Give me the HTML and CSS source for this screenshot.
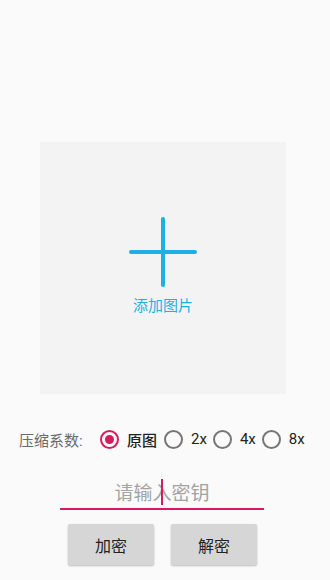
FILE: index.html
```html
<!DOCTYPE html>
<html lang="zh-CN">
<head>
<meta charset="utf-8">
<title>加密</title>
<link rel="stylesheet" href="styles.css">
</head>
<body>
<main class="screen">
  <section class="picker">
    <svg class="plus" width="72" height="72" viewBox="0 0 72 72" aria-hidden="true">
      <line x1="4" y1="36" x2="68" y2="36" />
      <line x1="36" y1="3" x2="36" y2="69" />
    </svg>
    <div class="picker-label">添加图片</div>
  </section>

  <div class="radio-row">
    <span class="row-label">压缩系数:</span>
    <label class="option first">
      <span class="dot checked"></span><span class="opt-text strong">原图</span>
    </label>
    <label class="option">
      <span class="dot"></span><span class="opt-text">2x</span>
    </label>
    <label class="option">
      <span class="dot"></span><span class="opt-text">4x</span>
    </label>
    <label class="option">
      <span class="dot"></span><span class="opt-text">8x</span>
    </label>
  </div>

  <div class="field">
    <span class="placeholder">请输入密钥</span>
    <span class="caret"></span>
  </div>

  <div class="buttons">
    <button class="btn">加密</button>
    <button class="btn">解密</button>
  </div>
</main>
</body>
</html>
```

FILE: styles.css
```css
html, body {
  margin: 0;
  padding: 0;
  background: #fafafa;
}
body {
  font-family: Roboto, "Noto Sans CJK SC", "Noto Sans", sans-serif;
  width: 330px;
  height: 580px;
  overflow: hidden;
}
.screen {
  display: flex;
  flex-direction: column;
  padding-top: 142px;
}
.picker {
  margin-left: 40px;
  width: 246px;
  height: 252px;
  box-sizing: border-box;
  background: #f3f3f3;
  display: flex;
  flex-direction: column;
  align-items: center;
  padding-top: 74px;
}
.plus line {
  stroke: #1eafe6;
  stroke-width: 4;
  stroke-linecap: round;
}
.picker-label {
  margin-top: 8px;
  font-size: 15px;
  line-height: 20px;
  color: #1eafe6;
}
.radio-row {
  display: flex;
  align-items: center;
  margin-top: 30px;
  height: 30px;
  padding-left: 19px;
}
.row-label {
  width: 81px;
  font-size: 15px;
  color: #6b6b6b;
}
.option {
  display: flex;
  align-items: center;
  margin-left: 6px;
}
.option.first {
  margin-left: 0;
}
.option.first + .option {
  margin-left: 7px;
}
.dot {
  width: 19px;
  height: 19px;
  box-sizing: border-box;
  border: 2px solid #767676;
  border-radius: 50%;
  display: flex;
  align-items: center;
  justify-content: center;
}
.dot.checked {
  border-color: #d81b60;
}
.dot.checked::after {
  content: "";
  width: 9px;
  height: 9px;
  border-radius: 50%;
  background: #d81b60;
}
.opt-text {
  margin-left: 8px;
  font-size: 15px;
  color: #222;
}
.opt-text.strong {
  font-weight: 500;
}
.field {
  position: relative;
  margin-top: 25px;
  margin-left: 60px;
  width: 204px;
  height: 29px;
  border-bottom: 2px solid #d81b60;
  text-align: center;
}
.placeholder {
  font-size: 19px;
  line-height: 29px;
  color: #a3a3a3;
}
.caret {
  position: absolute;
  left: 101px;
  top: 0;
  width: 2px;
  height: 26px;
  background: #d81b60;
}
.buttons {
  display: flex;
  gap: 17px;
  margin-top: 14px;
  margin-left: 68px;
}
.btn {
  width: 86px;
  height: 41px;
  border: none;
  border-radius: 2px;
  background: #d6d6d6;
  box-shadow: 0 1px 2px rgba(0, 0, 0, 0.25);
  font-family: Roboto, "Noto Sans CJK SC", sans-serif;
  font-size: 16px;
  color: #222;
  padding: 0;
}
```
